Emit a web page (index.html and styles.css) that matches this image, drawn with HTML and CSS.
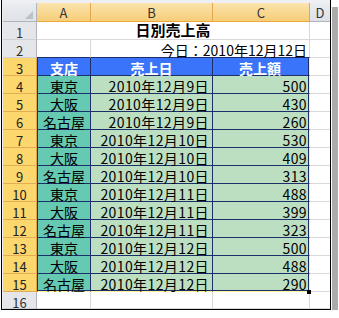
FILE: index.html
```html
<!DOCTYPE html>
<html lang="ja">
<head>
<meta charset="utf-8">
<title>日別売上高</title>
<link rel="stylesheet" href="styles.css">
</head>
<body>
<div class="window">
  <div class="sheet">
    <div class="corner"><svg width="8" height="8" viewBox="0 0 8 8"><polygon points="8,0 8,8 0,8" fill="#bcc1c7"/></svg></div>
    <div class="ch on">A</div>
    <div class="ch on">B</div>
    <div class="ch on">C</div>
    <div class="ch last">D</div>

    <div class="rh">1</div>
    <div class="cell title">日別売上高</div>
    <div class="cell d"></div>

    <div class="rh">2</div>
    <div class="cell top"></div>
    <div class="cell today top">今日：2010年12月12日</div>
    <div class="cell d"></div>

    <div class="rh on">3</div>
    <div class="cell t a hd">支店</div>
    <div class="cell t hd">売上日</div>
    <div class="cell t c hd">売上額</div>
    <div class="cell d"></div>

    <div class="rh on">4</div>
    <div class="cell t a">東京</div>
    <div class="cell t n">2010年12月9日</div>
    <div class="cell t n c">500</div>
    <div class="cell d"></div>

    <div class="rh on">5</div>
    <div class="cell t a">大阪</div>
    <div class="cell t n">2010年12月9日</div>
    <div class="cell t n c">430</div>
    <div class="cell d"></div>

    <div class="rh on">6</div>
    <div class="cell t a">名古屋</div>
    <div class="cell t n">2010年12月9日</div>
    <div class="cell t n c">260</div>
    <div class="cell d"></div>

    <div class="rh on">7</div>
    <div class="cell t a">東京</div>
    <div class="cell t n">2010年12月10日</div>
    <div class="cell t n c">530</div>
    <div class="cell d"></div>

    <div class="rh on">8</div>
    <div class="cell t a">大阪</div>
    <div class="cell t n">2010年12月10日</div>
    <div class="cell t n c">409</div>
    <div class="cell d"></div>

    <div class="rh on">9</div>
    <div class="cell t a">名古屋</div>
    <div class="cell t n">2010年12月10日</div>
    <div class="cell t n c">313</div>
    <div class="cell d"></div>

    <div class="rh on">10</div>
    <div class="cell t a">東京</div>
    <div class="cell t n">2010年12月11日</div>
    <div class="cell t n c">488</div>
    <div class="cell d"></div>

    <div class="rh on">11</div>
    <div class="cell t a">大阪</div>
    <div class="cell t n">2010年12月11日</div>
    <div class="cell t n c">399</div>
    <div class="cell d"></div>

    <div class="rh on">12</div>
    <div class="cell t a">名古屋</div>
    <div class="cell t n">2010年12月11日</div>
    <div class="cell t n c">323</div>
    <div class="cell d"></div>

    <div class="rh on">13</div>
    <div class="cell t a">東京</div>
    <div class="cell t n">2010年12月12日</div>
    <div class="cell t n c">500</div>
    <div class="cell d"></div>

    <div class="rh on">14</div>
    <div class="cell t a">大阪</div>
    <div class="cell t n">2010年12月12日</div>
    <div class="cell t n c">488</div>
    <div class="cell d"></div>

    <div class="rh on">15</div>
    <div class="cell t a end">名古屋</div>
    <div class="cell t n end">2010年12月12日</div>
    <div class="cell t n c end handle">290</div>
    <div class="cell d"></div>

    <div class="rh">16</div>
    <div class="cell"></div>
    <div class="cell"></div>
    <div class="cell"></div>
    <div class="cell d"></div>
  </div>
</div>
</body>
</html>
```

FILE: styles.css
```css
* {
  box-sizing: border-box;
}

html,
body {
  margin: 0;
  background: #fff;
}

body {
  font-family: "Noto Sans CJK JP", "Noto Sans", sans-serif;
  color: #000;
}

.window {
  margin-left: 1px;
  width: 330px;
  border: 1px solid #000;
  border-top: 0;
  padding: 3px 0 0 1px;
  background: #eef0f3;
  box-shadow: 0 0 0 1px #fff, 7px 7px 0 0 #ababab;
}

.sheet {
  display: grid;
  grid-template-columns: 34px 54px 122px 97px 20px;
  grid-template-rows: 19px repeat(15, 18px) 17px;
  background: #fff;
}

.corner {
  background: linear-gradient(#e9ecf0, #dfe2e7);
  border-right: 1px solid #b1b5bb;
  border-bottom: 1px solid #b1b5bb;
  display: flex;
  justify-content: flex-end;
  align-items: flex-end;
  padding: 0 3px 2px 0;
}

.corner svg {
  display: block;
}

.ch {
  background: linear-gradient(#eaedf1, #dde1e6);
  border-right: 1px solid #c3c8ce;
  border-bottom: 1px solid #b1b5bb;
  text-align: center;
  font-size: 13px;
  line-height: 14px;
  padding-top: 3px;
  color: #333;
}

.ch.on {
  background: linear-gradient(#fbe4ae, #f6cd78);
  border-right-color: #e2a94f;
  border-bottom-color: #eba83d;
}

.ch.last {
  border-right: 0;
}

.rh {
  background: #e4e6ea;
  border-right: 1px solid #b1b5bb;
  border-bottom: 1px solid #cdd0d5;
  text-align: center;
  font-size: 13px;
  line-height: 14px;
  padding-top: 3.5px;
  color: #333;
}

.rh.on {
  background: #fcd76d;
  border-bottom-color: #e3ad58;
  border-right-color: #e7a43c;
  color: #222;
}

.cell {
  background: #fff;
  border-right: 1px solid #d9d9d9;
  border-bottom: 1px solid #d9d9d9;
  font-size: 14px;
  line-height: 16px;
  padding-top: 1.5px;
  white-space: nowrap;
}

.cell.d {
  border-right: 0;
}

.title {
  grid-column: span 3;
  text-align: center;
  font-weight: bold;
  font-size: 15px;
  line-height: 16px;
  padding-top: 0;
}

.today {
  grid-column: span 2;
  text-align: right;
  padding-right: 2px;
}

.top {
  border-bottom-color: #1d2f6b;
}

.t {
  border-right-color: #1d2f6b;
  border-bottom-color: #1d2f6b;
}

.t.a {
  border-left: 1px solid #1d2f6b;
  background: #66c9b2;
  text-align: center;
}

.t.n {
  background: #bcdfc2;
  text-align: right;
  padding-right: 3px;
  letter-spacing: 0.4px;
}

.t.c {
  border-right-color: #fff49a;
  box-shadow: inset -1px 0 0 #1d2f6b;
  padding-right: 2px;
}

.t.end {
  border-bottom-color: #fff49a;
  box-shadow: inset 0 -1px 0 #1d2f6b;
}

.t.c.end {
  box-shadow: inset -1px 0 0 #1d2f6b, inset 0 -1px 0 #1d2f6b;
}

.t.hd {
  background: #3a74fb;
  color: #fff;
  font-weight: bold;
  text-align: center;
  letter-spacing: 0;
}

.handle {
  position: relative;
}

.handle::after {
  content: "";
  position: absolute;
  right: -2px;
  bottom: -3px;
  width: 4px;
  height: 4px;
  background: #000;
}
```
